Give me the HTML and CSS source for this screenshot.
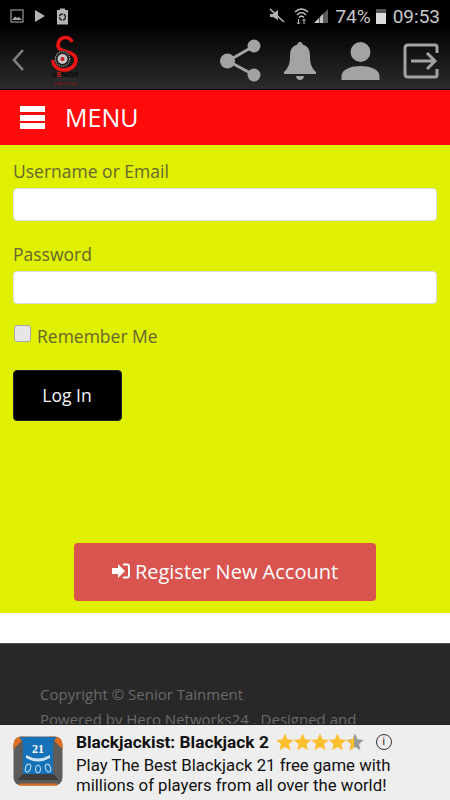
FILE: index.html
```html
<!DOCTYPE html>
<html lang="en">
<head>
    <meta charset="UTF-8">
    <meta name="viewport" content="width=device-width, initial-scale=1.0">
    <title>Senior Tainment</title>
    <link rel="stylesheet" href="styles.css">
</head>
<body>

    <div class="top">
        <!-- Phone status bar -->
        <div class="status-bar">
            <div class="status-left">
                <svg width="14" height="14" viewBox="0 0 14 14"><rect x="1" y="1" width="12" height="12" fill="none" stroke="#8c8c8c" stroke-width="1.3"/><path d="M2 11 L5 7.5 L7 9 L9 8 L12 11 Z" fill="#a8a8a8"/></svg>
                <svg width="12" height="14" viewBox="0 0 12 14"><path d="M1 1 L11 7 L1 13 Z" fill="#b4b4b4"/></svg>
                <svg width="13" height="17" viewBox="0 0 13 17"><path d="M4 0.5 H9 V2 H12 V16.5 H1 V2 H4 Z" fill="#b4b4b4"/><circle cx="6.5" cy="9" r="3" fill="none" stroke="#222" stroke-width="1.4" stroke-dasharray="4 1"/></svg>
            </div>
            <div class="status-right">
                <svg width="16" height="16" viewBox="0 0 16 16"><path d="M1 6 H4 L9 2 V12 L4 9 H1 Z" fill="#b4b4b4"/><path d="M1 1 L15 14" stroke="#b4b4b4" stroke-width="1.6"/></svg>
                <svg class="wifi" width="15" height="18" viewBox="0 0 15 18"><path d="M1 5 Q7.5 -1 14 5 M3 8 Q7.5 3 12 8 M5 10.5 Q7.5 8 10 10.5" fill="none" stroke="#c4c4c4" stroke-width="1.4"/><path d="M4.5 12 V17 M3 15.5 L4.5 17 L6 15.5 M10 17 V12 M8.5 13.5 L10 12 L11.5 13.5" fill="none" stroke="#c4c4c4" stroke-width="1"/></svg>
                <svg class="signal" width="16" height="16" viewBox="0 0 16 16"><path d="M1 15 L15 1 V15 Z" fill="#5c5c5c"/><path d="M1 15 L6 10 V15 Z M7 15 V9 L10 6 V15 Z" fill="#c4c4c4"/></svg>
                <span class="battery-pct">74%</span>
                <span class="battery"><span class="battery-fill"></span></span>
                <span class="clock">09:53</span>
            </div>
        </div>

        <!-- App header -->
        <div class="app-header">
            <svg class="back" width="14" height="24" viewBox="0 0 14 24"><path d="M12 2 L3 12 L12 22" fill="none" stroke="#808080" stroke-width="2.6"/></svg>
            <div class="logo">
                <svg width="32" height="52" viewBox="0 0 32 52">
                    <path d="M23 8 C22 5 19 3.500 16 3.500 C12 3.500 9 7 9 11 C9 15 12 16 17 17.500 C23 19 27 22 27 26 C27 32 21 36 15 36 C9 36 4 32 4 26" fill="none" stroke="#f01414" stroke-width="3.6"/>
                    <circle cx="13.500" cy="25" r="8.500" fill="#1c1c1c"/>
                    <circle cx="13.500" cy="25" r="7.200" fill="none" stroke="#aaa" stroke-width="1.200" stroke-dasharray="1 1"/>
                    <circle cx="13.500" cy="25" r="5" fill="#c4c4c4"/>
                    <circle cx="13.500" cy="25" r="2" fill="#d01818"/>
                    <text x="16.500" y="43" class="logo-name" text-anchor="middle">S<tspan fill="#d01818">E</tspan>NIOR</text>
                    <text x="16.500" y="47" class="logo-line" text-anchor="middle">TAINMENT</text>
                    <text x="16.500" y="51" class="logo-sub" text-anchor="middle">LIFE STYLE</text>
                </svg>
            </div>
            <div class="header-icons">
                <svg width="42" height="44" viewBox="0 0 42 44"><path d="M34 7 L8 22 L34 36" fill="none" stroke="#a3a3a3" stroke-width="3"/><circle cx="34" cy="7" r="6.500" fill="#a3a3a3"/><circle cx="7.500" cy="22" r="7.500" fill="#a3a3a3"/><circle cx="34" cy="36" r="6.500" fill="#a3a3a3"/></svg>
                <svg width="34" height="40" viewBox="0 0 34 40"><path d="M17 1 C19 1 19.500 2.500 19.500 3.500 C25 5 27 9 27 15 C27 22 28 26 33 31 V33 H1 V31 C6 26 7 22 7 15 C7 9 9 5 14.500 3.500 C14.500 2.500 15 1 17 1 Z" fill="#a3a3a3"/><path d="M13 35 H21 C20.500 38 19 39 17 39 C15 39 13.500 38 13 35 Z" fill="#a3a3a3"/></svg>
                <svg class="icon-user" width="39" height="40" viewBox="0 0 39 40"><circle cx="19.500" cy="11" r="10" fill="#a3a3a3"/><path d="M0.500 39 V35 C0.500 28 11 25 19.500 25 C28 25 38.500 28 38.500 35 V39 Z" fill="#a3a3a3"/></svg>
                <svg class="icon-exit" width="36" height="36" viewBox="0 0 36 36"><path d="M34 10 V4 Q34 2 32 2 H5 Q2 2 2 5 V31 Q2 34 5 34 H32 Q34 34 34 32 V26" fill="none" stroke="#a3a3a3" stroke-width="3"/><path d="M8 18 H32 M24 10 L32 18 L24 26" fill="none" stroke="#a3a3a3" stroke-width="3"/></svg>
            </div>
        </div>
    </div>

    <!-- Menu bar -->
    <div class="menu-bar">
        <span class="burger"><i></i><i></i><i></i></span>
        <span class="menu-label">MENU</span>
    </div>

    <!-- Login form -->
    <div class="login">
        <label class="field-label">Username or Email</label>
        <input class="field" type="text">
        <label class="field-label">Password</label>
        <input class="field" type="password">
        <div class="remember">
            <span class="check"></span>
            <span>Remember Me</span>
        </div>
        <button class="login-btn">Log In</button>
        <button class="register-btn">
            <svg width="18" height="16" viewBox="0 0 18 16"><path d="M0 5 H6 V1 L13 8 L6 15 V11 H0 Z" fill="#fff"/><path d="M11 1.500 H15 Q17 1.500 17 3.500 V12.500 Q17 14.500 15 14.500 H11" fill="none" stroke="#fff" stroke-width="2"/></svg>
            Register New Account
        </button>
    </div>

    <div class="spacer"></div>

    <div class="footer">
        <p>Copyright © Senior Tainment</p>
        <p>Powered by Hero Networks24 . Designed and</p>
    </div>

    <!-- Ad banner over the page bottom -->
    <div class="ad">
        <svg class="ad-icon" width="50" height="50" viewBox="0 0 50 50">
            <rect x="0.500" y="0.500" width="49" height="49" rx="8" fill="#5c5c5c"/>
            <path d="M0.500 9 Q0.500 0.500 9 0.500 H13 L0.500 13 Z M49.500 9 Q49.500 0.500 41 0.500 H37 L49.500 13 Z" fill="#e07020"/>
            <path d="M6 48.500 H44" stroke="#e06a1c" stroke-width="2"/>
            <path d="M6 1 H44 L40 6 V38 H10 V6 Z" fill="#1672b8"/>
            <path d="M10 38 H40 L46 44 H4 Z" fill="#3d3d3d"/>
            <text x="25" y="17" class="ad-icon-num" text-anchor="middle">21</text>
            <path d="M13 19 Q25 26 37 19 L37 22 Q25 29 13 22 Z" fill="#cfe3f2"/>
            <ellipse cx="15" cy="32" rx="2.500" ry="4" fill="none" stroke="#cfe3f2" transform="rotate(20 15 32)"/>
            <ellipse cx="25" cy="33" rx="2.500" ry="4" fill="none" stroke="#cfe3f2"/>
            <ellipse cx="35" cy="32" rx="2.500" ry="4" fill="none" stroke="#cfe3f2" transform="rotate(-20 35 32)"/>
        </svg>
        <div class="ad-body">
            <div class="ad-title-row">
                <span class="ad-title">Blackjackist: Blackjack 2</span>
                <svg class="stars" width="88" height="18" viewBox="0 0 88 18">
                    <defs>
                        <path id="star" d="M9 0.500 L11.500 6.300 L17.800 6.900 L13 11 L14.500 17.200 L9 13.900 L3.500 17.200 L5 11 L0.200 6.900 L6.500 6.300 Z"/>
                        <clipPath id="half"><rect x="0" y="0" width="8" height="18"/></clipPath>
                    </defs>
                    <use href="#star" fill="#fdbf2d"/>
                    <use href="#star" x="17.500" fill="#fdbf2d"/>
                    <use href="#star" x="35" fill="#fdbf2d"/>
                    <use href="#star" x="52.500" fill="#fdbf2d"/>
                    <use href="#star" x="70" fill="#9a9a9a"/>
                    <g transform="translate(70 0)"><use href="#star" fill="#fdbf2d" clip-path="url(#half)"/></g>
                </svg>
                <span class="ad-info">i</span>
            </div>
            <div class="ad-text">Play The Best Blackjack 21 free game with<br>millions of players from all over the world!</div>
        </div>
    </div>

</body>
</html>
```

FILE: styles.css
```css
* {
    margin: 0;
    padding: 0;
    box-sizing: border-box;
}

html, body {
    height: 800px;
    overflow: hidden;
}

body {
    font-family: 'Open Sans', sans-serif;
    background-color: #fff;
    position: relative;
}

.top {
    height: 90px;
    background: linear-gradient(#000 0, #000 24px, #2b2b2b 89px);
    border-bottom: 1px solid #000;
}

.status-bar {
    height: 32px;
    display: flex;
    justify-content: space-between;
    align-items: center;
    padding: 0 10px 0 10px;
}

.status-left {
    display: flex;
    align-items: center;
    gap: 10px;
}

.status-right {
    display: flex;
    align-items: center;
    font-family: Roboto, sans-serif;
    color: #c8c8c8;
    font-size: 19px;
}

.wifi {
    margin-left: 9px;
}

.signal {
    margin-left: 4px;
}

.battery-pct {
    margin-left: 6px;
}

.battery {
    width: 10px;
    height: 15px;
    margin-left: 5px;
    margin-right: 7px;
    background-color: #555;
    display: flex;
    align-items: flex-end;
}

.battery-fill {
    width: 100%;
    height: 11px;
    background-color: #ddd;
}

.app-header {
    height: 57px;
    display: flex;
    align-items: center;
    padding-left: 11px;
}

.back {
    margin-top: -1px;
}

.logo {
    margin-left: 24px;
    margin-top: -2px;
    display: flex;
}

.logo-name {
    font-family: 'Liberation Sans', sans-serif;
    font-size: 7px;
    font-weight: bold;
    fill: #0c0c0c;
}

.logo-line {
    font-family: 'Liberation Sans', sans-serif;
    font-size: 4px;
    fill: #3a3a3a;
}

.logo-sub {
    font-family: 'Liberation Sans', sans-serif;
    font-size: 4px;
    fill: #b01414;
}

.header-icons {
    margin-left: auto;
    display: flex;
    align-items: center;
    gap: 21px;
    padding-right: 11px;
}

.icon-user {
    margin-left: 3px;
}

.icon-exit {
    margin-left: 2px;
}

.menu-bar {
    height: 55px;
    background-color: #ff0a0a;
    display: flex;
    align-items: center;
    padding-left: 20px;
}

.burger {
    width: 25px;
    display: flex;
    flex-direction: column;
    gap: 2.500px;
}

.burger i {
    height: 6px;
    background-color: #fff;
}

.menu-label {
    margin-left: 20px;
    color: #fff;
    font-size: 25px;
    line-height: 1;
}

.login {
    height: 468px;
    background-color: #dff000;
    padding: 14px 13px 0;
    display: flex;
    flex-direction: column;
    align-items: flex-start;
}

.field-label {
    color: #66662f;
    font-size: 17.500px;
    line-height: 24px;
}

.field {
    width: 100%;
    height: 33px;
    margin-top: 5px;
    margin-bottom: 21px;
    background-color: #fff;
    border: 1px solid #ddd;
    border-radius: 4px;
}

.remember {
    display: flex;
    align-items: center;
    color: #66662f;
    font-size: 17.500px;
    line-height: 24px;
    gap: 6px;
    margin-top: -1px;
}

.check {
    width: 17px;
    height: 17px;
    margin-top: -6px;
    margin-left: 1px;
    background-color: #e6e6e6;
    border: 1px solid #a9a9a9;
    border-radius: 3px;
}

.login-btn {
    width: 109px;
    height: 51px;
    margin-top: 22px;
    padding: 0 1px 2px 0;
    background-color: #000;
    color: #f4f4f4;
    border: 1px solid #222;
    border-radius: 4px;
    font-family: 'Open Sans', sans-serif;
    font-size: 17.500px;
}

.register-btn {
    width: 302px;
    height: 58px;
    margin-top: 122px;
    padding-bottom: 2px;
    align-self: center;
    background-color: #d9534f;
    color: #fff;
    border: none;
    border-radius: 4px;
    font-family: 'Open Sans', sans-serif;
    font-size: 20px;
    display: flex;
    align-items: center;
    justify-content: center;
    gap: 5px;
}

.spacer {
    height: 30px;
    background-color: #fff;
}

.footer {
    height: 157px;
    overflow: hidden;
    background-color: #282828;
    border-top: 1px solid #555;
    padding: 40px 40px 0;
    color: #6a6a6a;
    font-size: 15px;
    line-height: 21px;
}

.footer p {
    margin-bottom: 4px;
    white-space: nowrap;
}

.ad {
    position: absolute;
    left: 0;
    bottom: 0;
    width: 450px;
    height: 76px;
    background-color: #eee;
    border-top: 1px solid #222;
    display: flex;
    font-family: Roboto, sans-serif;
    color: #111;
}

.ad-icon {
    margin: 11px 0 0 13px;
    flex: none;
}

.ad-body {
    margin-left: 13px;
    padding-top: 6px;
}

.ad-title-row {
    display: flex;
    align-items: center;
    height: 21px;
}

.ad-title {
    font-size: 17.300px;
    font-weight: bold;
}

.stars {
    margin-left: 7px;
}

.ad-info {
    width: 16px;
    height: 16px;
    margin-left: 12px;
    border: 1px solid #333;
    border-radius: 50%;
    font-size: 10px;
    line-height: 14px;
    text-align: center;
}

.ad-text {
    font-size: 16.750px;
    line-height: 20px;
    margin-top: 3px;
    white-space: nowrap;
}

.ad-icon-num {
    font-family: 'Liberation Serif', serif;
    font-size: 12px;
    font-weight: bold;
    fill: #fff;
}
```
